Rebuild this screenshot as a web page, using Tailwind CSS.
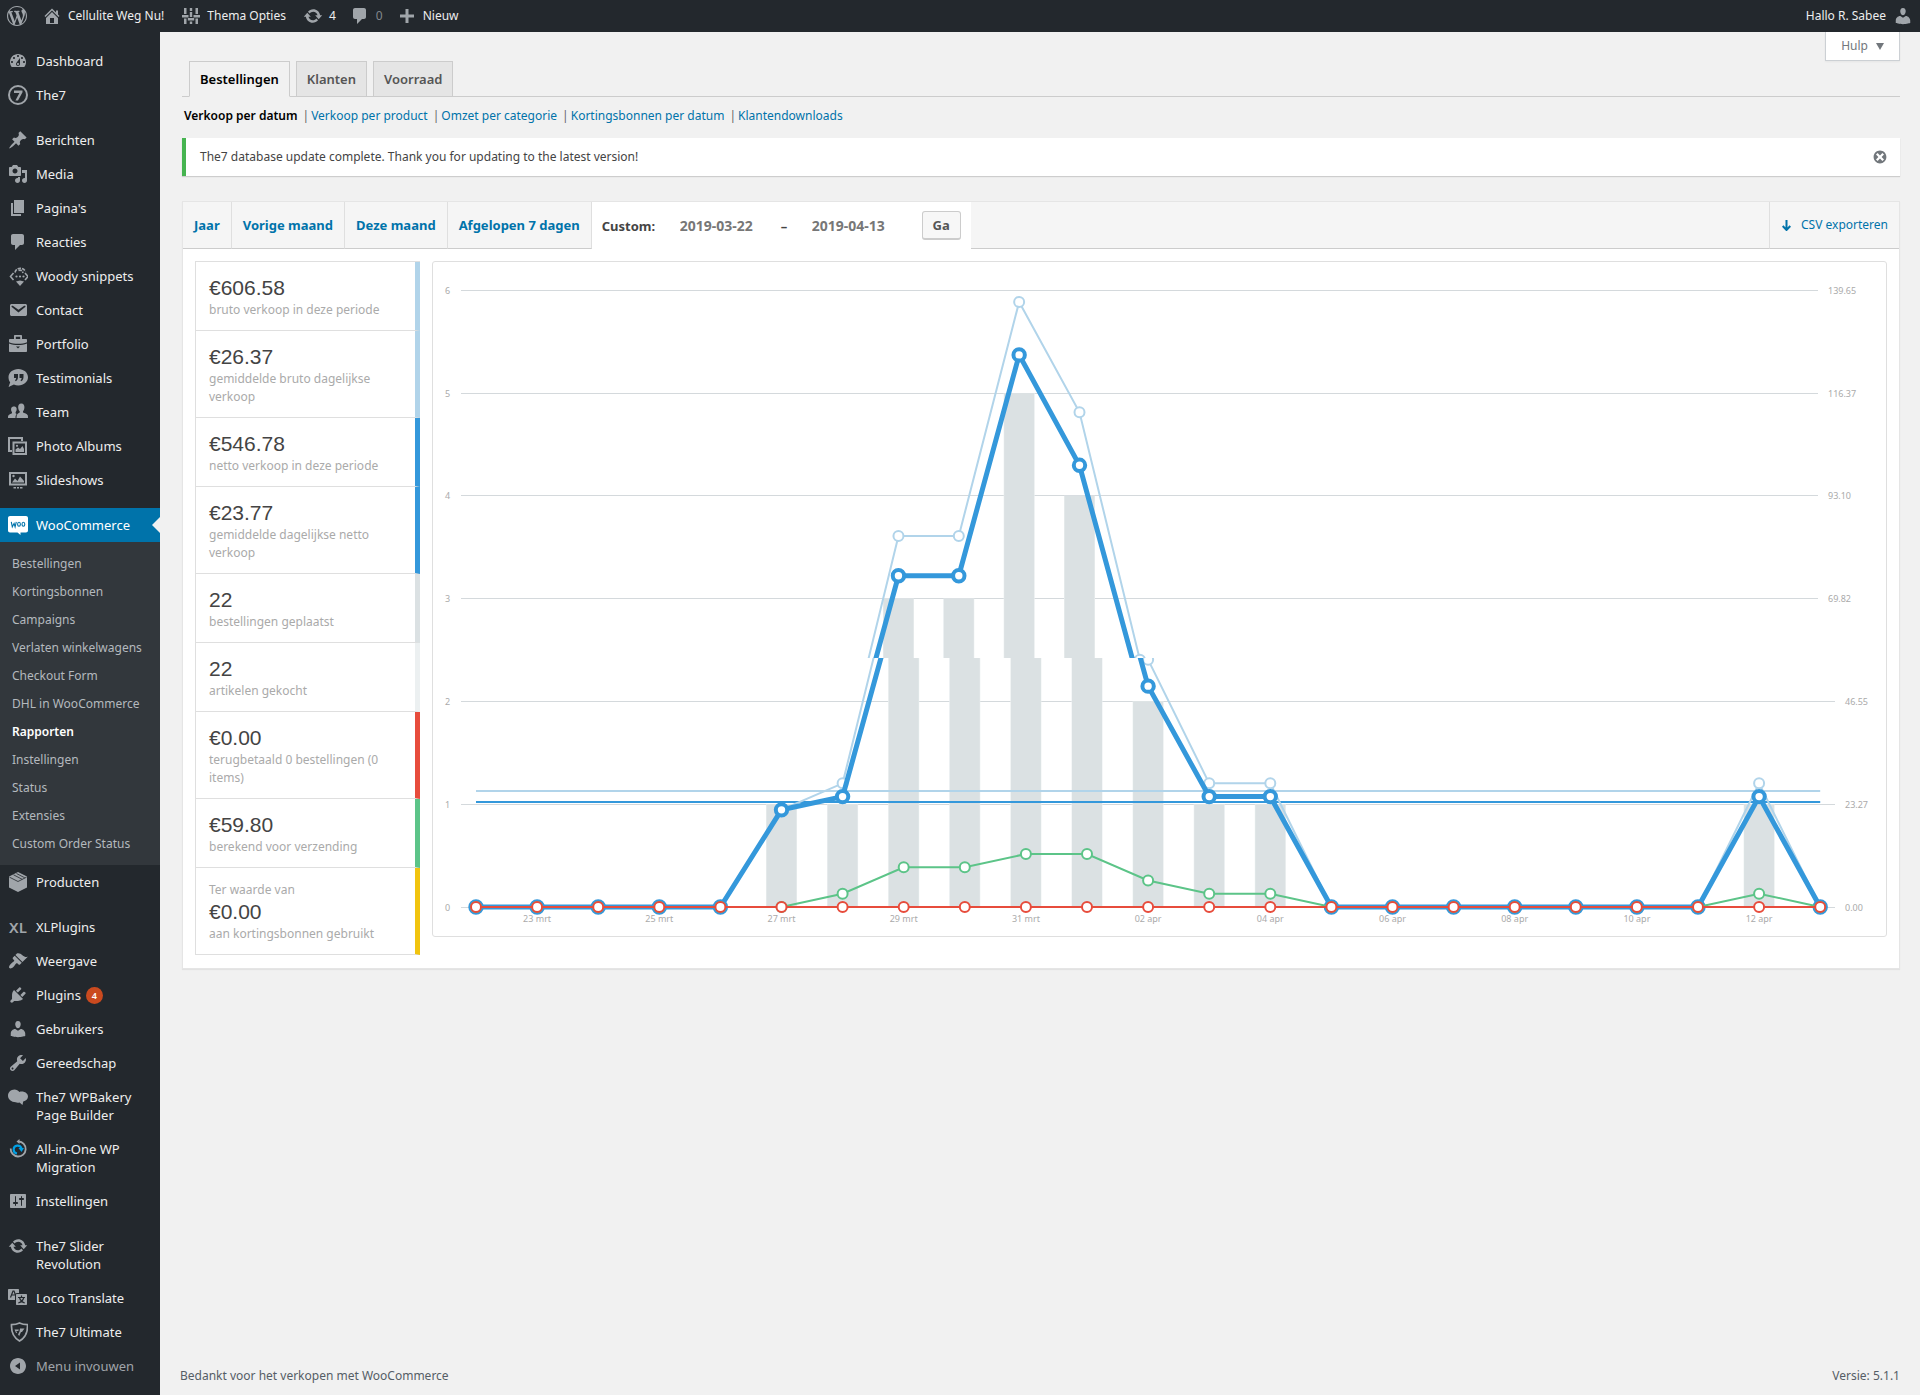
<!DOCTYPE html>
<html lang="nl">
<head>
    <meta charset="UTF-8">
    <meta name="viewport" content="width=device-width, initial-scale=1.0">
    <title>Rapporten ‹ Cellulite Weg Nu! — WordPress</title>
    <script src="https://cdn.jsdelivr.net/npm/@tailwindcss/browser@4"></script>
</head>
<body class="min-h-screen flex flex-col bg-[#f1f1f1] font-['Noto_Sans','Open_Sans',sans-serif] text-[12px] leading-[18px] text-[#444]">

    <!-- icon sprite -->
    <svg class="hidden" xmlns="http://www.w3.org/2000/svg">
        <symbol id="i-wp" viewBox="0 0 20 20"><path d="M20 10c0-5.51-4.49-10-10-10C4.48 0 0 4.49 0 10c0 5.52 4.48 10 10 10 5.51 0 10-4.48 10-10zM7.78 15.37L4.37 6.22c.55-.02 1.17-.08 1.17-.08.5-.06.44-1.13-.06-1.11 0 0-1.45.11-2.37.11-.18 0-.37 0-.58-.01C4.12 2.69 6.87 1.11 10 1.11c2.33 0 4.45.87 6.05 2.34-.68-.11-1.65.39-1.65 1.58 0 .74.45 1.36.9 2.1.35.61.55 1.36.55 2.46 0 1.49-1.4 5-1.4 5l-3.03-8.37c.54-.02.82-.17.82-.17.5-.05.44-1.25-.06-1.22 0 0-1.44.12-2.38.12-.87 0-2.33-.12-2.33-.12-.5-.03-.56 1.2-.06 1.22l.92.08 1.26 3.41zM17.41 10c.24-.64.74-1.87.43-4.25.7 1.29 1.05 2.71 1.05 4.25 0 3.29-1.73 6.24-4.4 7.78.97-2.59 1.94-5.2 2.92-7.78zM6.1 18.09C3.12 16.65 1.11 13.53 1.11 10c0-1.3.23-2.48.72-3.59C3.25 10.3 4.67 14.2 6.1 18.09zm4.03-6.63l2.58 6.98c-.86.29-1.76.45-2.71.45-.79 0-1.57-.11-2.29-.33.81-2.38 1.62-4.74 2.42-7.1z"/></symbol>
        <symbol id="i-home" viewBox="0 0 20 20"><path d="M16 8.5l1.53 1.53-1.06 1.06L10 4.6l-6.47 6.49-1.06-1.06L10 2.5l4 4v-2h2v4zm-6-2.46l6 5.99V18H4v-5.97zM12 17v-5H8v5h4z"/></symbol>
        <symbol id="i-sliders" viewBox="0 0 20 20"><path d="M3 2h2.500v6H3zM1 9h6.500v2.500H1zM3 12.500h2.500V18H3zM8.800 2h2.400v3H8.800zM8.800 6h2.400v5H8.800zM6.800 12h6.400v2.500H6.800zM8.800 15.500h2.400V18H8.800zM14.500 2H17v6h-2.500zM12.500 9H19v2.500h-6.500zM14.500 12.500H17V18h-2.500z"/></symbol>
        <symbol id="i-update" viewBox="0 0 20 20"><path d="M10.2 3.28c3.53 0 6.43 2.61 6.92 6h2.08l-3.5 4-3.5-4h2.32c-.45-1.97-2.21-3.45-4.32-3.45-1.45 0-2.73.71-3.54 1.78L4.95 5.66C6.23 4.2 8.11 3.28 10.2 3.28zm-.4 13.44c-3.52 0-6.43-2.61-6.92-6H.8l3.5-4c1.17 1.33 2.33 2.67 3.5 4H5.48c.45 1.97 2.21 3.45 4.32 3.45 1.45 0 2.73-.71 3.54-1.78l1.71 1.95c-1.28 1.46-3.15 2.38-5.25 2.38z"/></symbol>
        <symbol id="i-comment" viewBox="0 0 20 20"><path d="M5 2h9c1.1 0 2 .9 2 2v7c0 1.1-.9 2-2 2h-2l-5 5v-5H5c-1.1 0-2-.9-2-2V4c0-1.1.9-2 2-2z"/></symbol>
        <symbol id="i-plus" viewBox="0 0 20 20"><path d="M8.500 3h3v5.500H17v3h-5.500V17h-3v-5.500H3v-3h5.500z"/></symbol>
        <symbol id="i-user" viewBox="0 0 20 20"><path d="M10 9.25c-2.27 0-2.73-3.44-2.73-3.44C7 4.02 7.82 2 9.97 2c2.16 0 2.98 2.02 2.71 3.81 0 0-.41 3.44-2.68 3.44zm0 2.57L12.72 10c2.39 0 4.52 2.33 4.52 4.53v2.49s-3.65 1.13-7.24 1.13c-3.65 0-7.24-1.13-7.24-1.13v-2.49c0-2.25 1.94-4.48 4.47-4.48z"/></symbol>
        <symbol id="i-dashboard" viewBox="0 0 20 20"><path d="M3.76 16h12.48c1.1-1.37 1.76-3.11 1.76-5 0-4.42-3.58-8-8-8s-8 3.58-8 8c0 1.89.66 3.63 1.76 5zM10 4c.55 0 1 .45 1 1s-.45 1-1 1-1-.45-1-1 .45-1 1-1zM6 6c.55 0 1 .45 1 1s-.45 1-1 1-1-.45-1-1 .45-1 1-1zm8 0c.55 0 1 .45 1 1s-.45 1-1 1-1-.45-1-1 .45-1 1-1zm-5.370 5.550L12 7v6c0 1.100-.9 2-2 2s-2-.9-2-2c0-.57.24-1.080.63-1.450zM4 10c.55 0 1 .45 1 1s-.45 1-1 1-1-.45-1-1 .45-1 1-1zm12 0c.55 0 1 .45 1 1s-.45 1-1 1-1-.45-1-1 .45-1 1-1zm-5 3c0-.55-.45-1-1-1s-1 .45-1 1 .45 1 1 1 1-.45 1-1z"/></symbol>
        <symbol id="i-seven" viewBox="0 0 20 20"><circle cx="10" cy="10" r="9" fill="none" stroke="currentColor" stroke-width="2"/><path d="M6 5.500h8.500v1.800L10 15.500H7.400l4-7.600H6z"/></symbol>
        <symbol id="i-pin" viewBox="0 0 20 20"><path d="M10.44 3.02l1.82-1.82 6.36 6.35-1.83 1.82c-1.05-.68-2.48-.57-3.41.36l-.75.75c-.92.93-1.04 2.35-.35 3.41l-1.83 1.82-2.41-2.41-2.8 2.79c-.42.42-3.38 2.71-3.8 2.29s1.86-3.39 2.28-3.81l2.79-2.79L4.1 9.36l1.83-1.82c1.05.69 2.48.57 3.4-.36l.75-.75c.93-.92 1.05-2.35.36-3.41z"/></symbol>
        <symbol id="i-media" viewBox="0 0 20 20"><path d="M13 11V4c0-.55-.45-1-1-1h-1.67L9 1H5L3.67 3H2c-.55 0-1 .45-1 1v7c0 .55.45 1 1 1h10c.55 0 1-.45 1-1zM7 4.5c1.38 0 2.5 1.12 2.5 2.5S8.38 9.5 7 9.5 4.5 8.38 4.5 7 5.62 4.5 7 4.5zM14 6h5v10.5c0 1.38-1.12 2.5-2.5 2.5S14 17.88 14 16.5s1.12-2.5 2.5-2.5c.17 0 .34.02.5.05V9h-3V6zm-4 8.05V13h2v3.5c0 1.38-1.12 2.5-2.5 2.5S7 17.88 7 16.5 8.12 14 9.5 14c.17 0 .34.02.5.05z"/></symbol>
        <symbol id="i-page" viewBox="0 0 20 20"><path d="M6 15V2h10v13H6zm-1 1h8v2H3V5h2v11z"/></symbol>
        <symbol id="i-woody" viewBox="0 0 20 20"><g fill="none" stroke="currentColor" stroke-width="1.6"><path d="M5.500 7L2.500 10.500 5.500 14M17 7l3 3.500L17 14"/><path d="M7 6.500C8 1.500 15 .5 17.500 5.500M10.500 4.500c2-1 4 0 4.500 2.500" stroke-dasharray="3.500 1"/></g><circle cx="8.500" cy="10.500" r="1.100"/><circle cx="12" cy="10.500" r="1.100"/><circle cx="15.500" cy="10.500" r="1.100"/><path d="M8 15.500l4-1 4 1L12 20z"/></symbol>
        <symbol id="i-mail" viewBox="0 0 20 20"><path d="M3.870 4h13.250C18.370 4 19 4.590 19 5.790v8.420c0 1.190-.63 1.790-1.880 1.790H3.870c-1.250 0-1.880-.6-1.880-1.790V5.790c0-1.200.63-1.790 1.880-1.790zm6.620 8.600l6.740-5.530c.24-.2.43-.66.13-1.070-.29-.41-.82-.42-1.170-.17l-5.700 3.860L4.800 5.830c-.35-.25-.88-.24-1.170.17-.3.41-.11.87.13 1.070z"/></symbol>
        <symbol id="i-portfolio" viewBox="0 0 20 20"><path d="M6 5V2c0-.6.4-1 1-1h6c.6 0 1 .4 1 1v3h4c.6 0 1 .4 1 1v2.200c-2.500 1-5.500 1.500-9 1.500S3.500 9.200 1 8.200V6c0-.6.4-1 1-1zm1.800 0h4.400V2.800H7.800zM1 9.500c2.800 1.100 5.800 1.600 9 1.600s6.200-.5 9-1.600V17c0 .6-.4 1-1 1H2c-.6 0-1-.4-1-1zM8 12.500l2 2 2-2z" fill-rule="evenodd"/></symbol>
        <symbol id="i-quote" viewBox="0 0 20 20"><path fill-rule="evenodd" d="M10.300 1C15.700 1 20 4.600 20 9.200s-4.300 8.200-9.700 8.200c-1.600 0-3.100-.3-4.400-.9L.5 19l1.700-4.800C1 12.800.5 11 .5 9.200.5 4.600 4.900 1 10.300 1zM6 6v4h2.200c0 1-.4 1.700-1.200 2.200l.7 1C9.300 12.300 10 11 10 9V6zm5.500 0v4h2.200c0 1-.4 1.700-1.200 2.200l.7 1c1.600-.9 2.300-2.200 2.300-4.200V6z"/></symbol>
        <symbol id="i-team" viewBox="0 0 20 20"><path d="M13.300 1.500c2.300 0 3.300 1.800 3.100 4.200-.2 1.700-.8 2.800-1.400 3.500v1.300c1.500.8 4 1.300 4.700 2.700.3.700.3 2 .3 2.800H8.500c0-.8 0-2 .3-2.800.6-1.400 1.700-1.900 2.900-2.700V9.200c-.7-.7-1.300-1.800-1.500-3.500-.2-2.400.8-4.200 3.100-4.200zM6 4.500c1.300 0 2.300.6 2.600 1.800.3 1.500-.2 3-1 3.900v1c.4.3.9.5 1.200.8-1.100 1-1.300 2.400-1.300 4H0c0-.8 0-1.700.2-2.300.5-1.300 2.600-1.700 3.800-2.500v-1c-.8-.9-1.100-2.400-.8-3.900C3.500 5.100 4.700 4.500 6 4.500z"/></symbol>
        <symbol id="i-album" viewBox="0 0 20 20"><path fill-rule="evenodd" d="M0 1h15v4h-2V3H2v11h3v2H0zM4.500 5.500H19V19H4.500zm2 2v9.500H17V7.500zM7.500 16v-2.500l2.500-2 2 1.500 2.500-3L16 13v3z"/><circle cx="9" cy="9.800" r="1.100"/></symbol>
        <symbol id="i-slides" viewBox="0 0 20 20"><path fill-rule="evenodd" d="M1 2h18v13.500H1zm2 2v9.500h14V4zM4 12.500l3-4 2.500 2.500L12 6.500l4 4.500v1.500zM5.500 17H8v1.500H5.500zm3.500 0h2v1.500H9zm3 0h2.500v1.500H12z"/><circle cx="5.500" cy="6" r="1.200"/></symbol>
        <symbol id="i-woo" viewBox="0 0 20 20"><path d="M2 1h16c1.100 0 2 .9 2 2v12.500c0 1.100-.9 2-2 2h-5.500V20l-3-2.500H2c-1.100 0-2-.9-2-2V3c0-1.100.9-2 2-2z" fill="#fff"/><g fill="none" stroke="#0073aa" stroke-width="1.100"><path d="M3.300 6.800l1 5 1.800-3.300 1 3.300 1.200-5"/><ellipse cx="11" cy="9.300" rx="1.400" ry="2"/><ellipse cx="15.400" cy="9.300" rx="1.400" ry="2"/></g></symbol>
        <symbol id="i-box" viewBox="0 0 20 20"><path d="M10 0l9 4.500v11L10 20l-9-4.500v-11z"/><path d="M1.500 5.200L10 9.500l8.500-4.300M5.500 2.800l8.700 4.500M8.500 1.500l8.300 4.300" fill="none" stroke="#23282d" stroke-width=".8"/></symbol>
        <symbol id="i-brush" viewBox="0 0 20 20"><path d="M14.48 11.06L7.41 3.99l1.5-1.5c.5-.56 2.3-.47 3.51.32 1.21.8 1.43 1.28 2.91 2.1 1.18.64 2.45 1.26 4.45.85zm-.71.71L6.7 4.7 4.93 6.47c-.39.39-.39 1.02 0 1.41l1.06 1.06c.39.39.39 1.03 0 1.42-.6.6-1.43 1.11-2.21 1.69-.35.26-.7.53-1.01.84C1.43 14.23.4 16.08 1.4 17.07c.99 1 2.84-.03 4.18-1.36.31-.31.58-.66.85-1.02.57-.78 1.08-1.61 1.69-2.21.39-.39 1.02-.39 1.41 0l1.06 1.06c.39.39 1.02.39 1.41 0z"/></symbol>
        <symbol id="i-plug" viewBox="0 0 20 20"><path d="M13.11 4.36L9.87 7.6 8 5.73l3.24-3.24c.35-.34 1.05-.2 1.56.32.52.51.66 1.21.31 1.55zm-8 1.77l.91-1.12 9.01 9.01-1.19.84c-.71.71-2.63 1.16-3.82 1.16H6.14L4.9 17.26c-.59.59-1.54.59-2.12 0-.59-.58-.59-1.53 0-2.12l1.24-1.24v-3.88c0-1.13.4-3.19 1.09-3.89zm7.26 3.97l3.24-3.24c.34-.35 1.04-.21 1.55.31.52.51.66 1.21.31 1.55l-3.24 3.25z"/></symbol>
        <symbol id="i-wrench" viewBox="0 0 20 20"><path d="M16.68 9.77c-1.34 1.34-3.3 1.67-4.95.99l-5.41 6.52c-.99.99-2.59.99-3.58 0s-.99-2.59 0-3.57l6.52-5.42c-.68-1.65-.35-3.61.99-4.95 1.28-1.28 3.12-1.62 4.72-1.06l-2.89 2.89 2.82 2.82 2.86-2.87c.53 1.58.18 3.39-1.08 4.65zM3.81 16.21c.4.39 1.04.39 1.43 0 .4-.4.4-1.04 0-1.43-.39-.4-1.03-.4-1.43 0-.39.39-.39 1.03 0 1.43z"/></symbol>
        <symbol id="i-bakery" viewBox="0 0 20 20"><path d="M6.500 2.500c2 0 3.700.9 4.900 2.400.7-.3 1.500-.4 2.300-.4 3.500 0 6.300 2.200 6.300 5.100 0 2.500-2 4.500-4.800 5L14.500 18l-3-2.500c-1.500.5-3 .3-3.800-.2C3.300 15.300 0 12.300 0 8.800S2.900 2.500 6.500 2.500z"/></symbol>
        <symbol id="i-migrate" viewBox="0 0 20 20"><path d="M10.500 2.500a7.500 7.500 0 1 1-7.800 7" fill="none" stroke="currentColor" stroke-width="1.800"/><path d="M11.500 0v5L8.500 2.500z"/><path d="M9 14.500a4 4 0 1 1 4.500-5" fill="none" stroke="#00a0e4" stroke-width="2.200"/><path d="M10.500 9h5.500l-2.500 4z" fill="#00a0e4"/></symbol>
        <symbol id="i-settings" viewBox="0 0 20 20"><path d="M18 16V4c0-.55-.45-1-1-1H3c-.55 0-1 .45-1 1v12c0 .55.45 1 1 1h14c.55 0 1-.45 1-1zM8 11h1c.55 0 1 .45 1 1s-.45 1-1 1H8v1.5c0 .28-.22.5-.5.5s-.5-.22-.5-.5V13H6c-.55 0-1-.45-1-1s.45-1 1-1h1V5.500c0-.28.22-.5.5-.5s.5.22.5.5V11zm5-2h-1c-.55 0-1-.45-1-1s.45-1 1-1h1V5.500c0-.28.22-.5.5-.5s.5.22.5.5V7h1c.55 0 1 .45 1 1s-.45 1-1 1h-1v5.500c0 .28-.22.5-.5.5s-.5-.22-.5-.5V9z"/></symbol>
        <symbol id="i-translate" viewBox="0 0 20 20"><path d="M1 1h9c.6 0 1 .4 1 1v3H9c-1.100 0-2 .9-2 2v5H1c-.6 0-1-.4-1-1V2c0-.6.400-1 1-1zM9 6h9c.6 0 1 .4 1 1v9c0 .6-.4 1-1 1H9c-.6 0-1-.4-1-1V7c0-.6.4-1 1-1z"/><g fill="none" stroke="#23282d" stroke-width="1.200"><path d="M2.500 9.500L5 3h1l1.500 4M3.500 7h3.500M13.500 7.500v1.500M10 9.500h7M15.800 9.500c-.6 2.500-2.500 4.500-5.500 5.500M11.500 9.500c.6 2.500 2.500 4.500 5.200 5.500"/></g></symbol>
        <symbol id="i-shield" viewBox="0 0 20 20"><path d="M11.500 1c2.500 1.200 5 1.600 8 1.600.4 8-2 13-8 16.400-6-3.400-8.400-8.400-8-16.400 3 0 5.500-.4 8-1.600z" fill="none" stroke="currentColor" stroke-width="1.700"/><path d="M6.500 7.500h4.300L10.300 9H8l1.200 1.200-1 1zM12 6.500h4.500L15 8.500l-1 1.500h-1L11.200 14l-1.200-1.500 1.500-3z"/></symbol>
        <symbol id="i-collapse" viewBox="0 0 20 20"><path d="M10 2c4.420 0 8 3.580 8 8s-3.580 8-8 8-8-3.580-8-8 3.580-8 8-8zm2 4.500L7 10l5 3.500z"/></symbol>
        <symbol id="i-dismiss" viewBox="0 0 20 20"><path d="M10 2c4.42 0 8 3.58 8 8s-3.58 8-8 8-8-3.58-8-8 3.58-8 8-8zm5 11l-3-3 3-3-2-2-3 3-3-3-2 2 3 3-3 3 2 2 3-3 3 3z"/></symbol>
    </svg>

    <!-- admin bar -->
    <header class="h-8 px-[7px] flex items-center justify-between bg-[#23282d] text-[#eee] text-[12px] [&_svg]:size-5 [&_svg]:fill-[#a0a5aa] [&_svg]:text-[#a0a5aa]">
        <nav class="flex items-center">
            <a href="#" class="mr-[15px]" aria-label="Over WordPress"><svg><use href="#i-wp"/></svg></a>
            <a href="#" class="flex items-center gap-[6px] mr-[17px]"><svg><use href="#i-home"/></svg>Cellulite Weg Nu!</a>
            <a href="#" class="flex items-center gap-[6px] mr-[17px]"><svg><use href="#i-sliders"/></svg>Thema Opties</a>
            <a href="#" class="flex items-center gap-[6px] mr-[14px]"><svg><use href="#i-update"/></svg>4</a>
            <a href="#" class="flex items-center gap-[6px] mr-[14px] text-[#82878c]"><svg><use href="#i-comment"/></svg>0</a>
            <a href="#" class="flex items-center gap-[6px]"><svg><use href="#i-plus"/></svg>Nieuw</a>
        </nav>
        <a href="#" class="flex items-center gap-[7px]">Hallo R. Sabee<svg><use href="#i-user"/></svg></a>
    </header>

    <div class="flex grow">
        <!-- menu -->
        <aside class="w-40 shrink-0 bg-[#23282d] pt-3 text-[13px] text-[#eee]">
            <ul class="[&>li>a]:flex [&>li>a]:items-start [&>li>a]:gap-2 [&>li>a]:py-2 [&>li>a]:pl-2 [&_svg]:size-5 [&_svg]:shrink-0 [&_svg]:fill-[#a0a5aa] [&_svg]:text-[#a0a5aa] [&_svg]:-my-px">
                <li><a href="#"><svg><use href="#i-dashboard"/></svg>Dashboard</a></li>
                <li class="mb-[11px]"><a href="#"><svg><use href="#i-seven"/></svg>The7</a></li>
                <li><a href="#"><svg><use href="#i-pin"/></svg>Berichten</a></li>
                <li><a href="#"><svg><use href="#i-media"/></svg>Media</a></li>
                <li><a href="#"><svg><use href="#i-page"/></svg>Pagina's</a></li>
                <li><a href="#"><svg><use href="#i-comment"/></svg>Reacties</a></li>
                <li><a href="#"><svg><use href="#i-woody"/></svg>Woody snippets</a></li>
                <li><a href="#"><svg><use href="#i-mail"/></svg>Contact</a></li>
                <li><a href="#"><svg><use href="#i-portfolio"/></svg>Portfolio</a></li>
                <li><a href="#"><svg><use href="#i-quote"/></svg>Testimonials</a></li>
                <li><a href="#"><svg><use href="#i-team"/></svg>Team</a></li>
                <li><a href="#"><svg><use href="#i-album"/></svg>Photo Albums</a></li>
                <li class="mb-[11px]"><a href="#"><svg><use href="#i-slides"/></svg>Slideshows</a></li>
                <li>
                    <a href="#" class="relative bg-[#0073aa] text-white"><svg><use href="#i-woo"/></svg>WooCommerce<span class="absolute right-0 top-[9px] border-8 border-transparent border-r-[#f1f1f1]"></span></a>
                    <ul class="bg-[#32373c] pt-2 pb-[7px] pl-3 text-[12px] leading-7 text-[#b4b9be]">
                        <li><a href="#">Bestellingen</a></li>
                        <li><a href="#">Kortingsbonnen</a></li>
                        <li><a href="#">Campaigns</a></li>
                        <li><a href="#">Verlaten winkelwagens</a></li>
                        <li><a href="#">Checkout Form</a></li>
                        <li><a href="#">DHL in WooCommerce</a></li>
                        <li><a href="#" class="font-semibold text-white">Rapporten</a></li>
                        <li><a href="#">Instellingen</a></li>
                        <li><a href="#">Status</a></li>
                        <li><a href="#">Extensies</a></li>
                        <li><a href="#">Custom Order Status</a></li>
                    </ul>
                </li>
                <li class="mb-[11px]"><a href="#"><svg><use href="#i-box"/></svg>Producten</a></li>
                <li><a href="#"><span class="w-5 text-center text-[15px] font-semibold text-[#a0a5aa]">XL</span>XLPlugins</a></li>
                <li><a href="#"><svg><use href="#i-brush"/></svg>Weergave</a></li>
                <li><a href="#"><svg><use href="#i-plug"/></svg><span class="flex items-center gap-[5px]">Plugins <span class="size-[17px] rounded-full bg-[#ca4a1f] text-center text-[9px] leading-[17px] font-semibold text-white">4</span></span></a></li>
                <li><a href="#"><svg><use href="#i-user"/></svg>Gebruikers</a></li>
                <li><a href="#"><svg><use href="#i-wrench"/></svg>Gereedschap</a></li>
                <li><a href="#"><svg><use href="#i-bakery"/></svg>The7 WPBakery<br>Page Builder</a></li>
                <li><a href="#"><svg><use href="#i-migrate"/></svg>All-in-One WP<br>Migration</a></li>
                <li class="mb-[11px]"><a href="#"><svg><use href="#i-settings"/></svg>Instellingen</a></li>
                <li><a href="#"><svg><use href="#i-update"/></svg>The7 Slider<br>Revolution</a></li>
                <li><a href="#"><svg><use href="#i-translate"/></svg>Loco Translate</a></li>
                <li><a href="#"><svg><use href="#i-shield"/></svg>The7 Ultimate</a></li>
            </ul>
            <button type="button" class="flex items-start gap-2 py-2 pl-2 text-[#a0a5aa]"><svg class="size-5 -my-px fill-[#a0a5aa]"><use href="#i-collapse"/></svg>Menu invouwen</button>
        </aside>

        <div class="grow min-w-0 flex flex-col pr-5">
            <div class="flex justify-end h-[29px]">
                <button type="button" class="flex items-center gap-2 border border-t-0 border-[#ccd0d4] bg-white px-[15px] text-[#72777c] shadow-xs">Hulp <span class="border-x-4 border-t-[7px] border-x-transparent border-t-[#72777c]"></span></button>
            </div>

            <main class="pl-[22px]">
                <nav class="flex gap-[6px] border-b border-[#ccc] pl-[7px] text-[13px] font-semibold [&>a]:-mb-px [&>a]:border [&>a]:border-[#ccc] [&>a]:px-[10px] [&>a]:py-2">
                    <a href="#" class="border-b-[#f1f1f1]! bg-[#f1f1f1] text-black">Bestellingen</a>
                    <a href="#" class="bg-[#e5e5e5] text-[#555]">Klanten</a>
                    <a href="#" class="bg-[#e5e5e5] text-[#555]">Voorraad</a>
                </nav>

                <ul class="mt-[10px] flex pl-[2px] text-[#0073aa] [&_span]:ml-[5px] [&_span]:mr-[2px] [&_span]:text-[#666]">
                    <li><a href="#" class="font-semibold text-black">Verkoop per datum</a><span>|</span></li>
                    <li><a href="#">Verkoop per product</a><span>|</span></li>
                    <li><a href="#">Omzet per categorie</a><span>|</span></li>
                    <li><a href="#">Kortingsbonnen per datum</a><span>|</span></li>
                    <li><a href="#">Klantendownloads</a></li>
                </ul>

                <div class="mt-[13px] flex items-center justify-between border-l-4 border-[#46b450] bg-white h-[38px] pl-[14px] pr-[12px] shadow-[0_1px_1px_rgba(0,0,0,0.15)]">
                    <p>The7 database update complete. Thank you for updating to the latest version!</p>
                    <button type="button" aria-label="Dit bericht verbergen"><svg class="size-4 fill-[#72777c]"><use href="#i-dismiss"/></svg></button>
                </div>

                <section class="mt-[25px] border border-[#e5e5e5] bg-white shadow-[0_1px_1px_rgba(0,0,0,0.06)]">
                    <div class="flex bg-[#f5f5f5] text-[13px] font-bold text-[#0073aa] [&>a]:border-r [&>a]:border-b [&>a]:border-r-[#dfdfdf] [&>a]:border-b-[#ccc] [&>a]:px-[11px] [&>a]:py-[14px]">
                        <a href="#">Jaar</a>
                        <a href="#">Vorige maand</a>
                        <a href="#">Deze maand</a>
                        <a href="#">Afgelopen 7 dagen</a>
                        <form class="flex items-center bg-white px-[10px] text-[#444]">
                            <label for="from" class="w-[68px]">Custom:</label>
                            <input id="from" type="text" value="2019-03-22" class="w-[101px] px-[10px] text-[14px] text-[#777]">
                            <span class="w-[31px] pl-[10px]">–</span>
                            <input id="to" type="text" value="2019-04-13" aria-label="Tot" class="w-[101px] px-[10px] text-[14px] text-[#777]">
                            <button type="button" class="ml-[19px] h-[29px] w-[39px] rounded-[3px] border border-b-2 border-[#ccc] bg-[#f7f7f7] text-[#555]">Ga</button>
                        </form>
                        <div class="grow border-b border-[#ccc]"></div>
                        <a href="#" class="flex items-center gap-[10px] border-l border-l-[#dfdfdf] border-r-0! text-[12px] font-normal"><svg class="ml-px h-[11px] w-[9px] fill-none stroke-[#0073aa] stroke-2" viewBox="0 0 9 11"><path d="M4.500 0v10M.7 6l3.800 4 3.800-4"/></svg>CSV exporteren</a>
                    </div>

                    <div class="flex items-start gap-3 px-3 pt-3 pb-[13px]">
                        <ul class="w-[225px] shrink-0 border-t border-[#dfdfdf] text-[#aaa] [&>li]:border-b [&>li]:border-l [&>li]:border-r-[5px] [&>li]:border-b-[#dfdfdf] [&>li]:border-l-[#dfdfdf] [&>li]:pt-[13px] [&>li]:pr-[13px] [&>li]:pb-[11px] [&>li]:pl-[13px] [&_strong]:block [&_strong]:font-['Liberation_Sans',Arial,sans-serif] [&_strong]:text-[21px] [&_strong]:leading-[26px] [&_strong]:font-normal [&_strong]:text-[#444]">
                            <li class="border-r-[#b1d4ea]"><strong>€606.58</strong>bruto verkoop in deze periode</li>
                            <li class="border-r-[#b1d4ea]"><strong>€26.37</strong>gemiddelde bruto dagelijkse verkoop</li>
                            <li class="border-r-[#3498db]"><strong>€546.78</strong>netto verkoop in deze periode</li>
                            <li class="border-r-[#3498db]"><strong>€23.77</strong>gemiddelde dagelijkse netto verkoop</li>
                            <li class="border-r-[#dbe1e3]"><strong>22</strong>bestellingen geplaatst</li>
                            <li class="border-r-[#ecf0f1]"><strong>22</strong>artikelen gekocht</li>
                            <li class="border-r-[#e74c3c]"><strong>€0.00</strong>terugbetaald 0 bestellingen (0 items)</li>
                            <li class="border-r-[#5cc488]"><strong>€59.80</strong>berekend voor verzending</li>
                            <li class="border-r-[#f1c40f]">Ter waarde van<strong>€0.00</strong>aan kortingsbonnen gebruikt</li>
                        </ul>
                        <div class="grow min-w-0 rounded-[3px] border border-[#dfdfdf]">
                            <svg id="chart" viewBox="0 0 1453 674" class="block w-full h-auto" role="img" aria-label="Verkoop per datum"></svg>
                        </div>
                    </div>
                </section>
            </main>

            <footer class="mt-auto flex justify-between pl-5 pb-[10px] text-[#555d66]">
                <p>Bedankt voor het verkopen met WooCommerce</p>
                <p>Versie: 5.1.1</p>
            </footer>
        </div>
    </div>

    <script>
        // index 0 = 22 mrt, index 22 = 13 apr
        const orders   = [0, 0, 0, 0, 0, 1, 1, 3, 3, 5, 4, 2, 1, 1, 0, 0, 0, 0, 0, 0, 0, 1, 0];
        const gross    = [0, 0, 0, 0, 0, 22, 28, 84, 84, 137, 112, 56, 28, 28, 0, 0, 0, 0, 0, 0, 0, 28, 0];
        const net      = [0, 0, 0, 0, 0, 22, 25, 75, 75, 125, 100, 50, 25, 25, 0, 0, 0, 0, 0, 0, 0, 25, 0];
        const shipping = [0, 0, 0, 0, 0, 0, 3, 9, 9, 12, 12, 6, 3, 3, 0, 0, 0, 0, 0, 0, 0, 3, 0];
        const refunds  = orders.map(() => 0);
        const ticks = ['23 mrt', '25 mrt', '27 mrt', '29 mrt', '31 mrt', '02 apr', '04 apr', '06 apr', '08 apr', '10 apr', '12 apr'];
        const money = ['0.00', '23.27', '46.55', '69.82', '93.10', '116.37', '139.65'];

        const x0 = 43, y0 = 645, unit = 102.8, split = 396;
        const yMoney = v => y0 - v / 139.65 * unit * 6;

        function line(values, step, color, width, r, ring) {
            const pts = values.map((v, i) => [x0 + i * step, yMoney(v)]);
            return `<polyline points="${pts.join(' ')}" fill="none" stroke="${color}" stroke-width="${width}"/>` +
                pts.map(p => `<circle cx="${p[0]}" cy="${p[1]}" r="${r}" fill="#fff" stroke="${color}" stroke-width="${ring}"/>`).join('');
        }

        function average(v, step, color) {
            return `<path d="M${x0} ${Math.round(yMoney(v))}H${x0 + 22 * step}" stroke="${color}" stroke-width="2"/>`;
        }

        // the upper and lower band have their own day width
        function band(id, top, bottom, step, gridEnd, labelX) {
            let out = `<clipPath id="${id}"><rect x="0" y="${top}" width="1453" height="${bottom - top}"/></clipPath><g clip-path="url(#${id})">`;
            for (let i = 0; i <= 6; i++) {
                const y = Math.floor(y0 - i * unit);
                if (y < top || y > bottom) continue;
                out += `<path d="M28 ${y + 0.5}H${gridEnd}" stroke="#d4d9dc"/>`;
                out += `<text x="12" y="${y + 4}">${i}</text><text x="${labelX}" y="${y + 4}">${money[i]}</text>`;
            }
            orders.forEach((n, i) => {
                if (!n) return;
                const x = x0 + i * step, y = y0 - n * unit;
                out += `<rect x="${x - 15.5}" y="${y}" width="31" height="${n * unit}" fill="#ecf0f1"/>`;
                out += `<rect x="${x - 15}" y="${y}" width="30" height="${n * unit}" fill="#dbe1e3"/>`;
            });
            out += average(26.37, step, '#b1d4ea') + average(23.77, step, '#3498db');
            out += line(gross, step, '#b1d4ea', 2, 5, 2);
            out += line(net, step, '#3498db', 5, 5.7, 4);
            out += line(shipping, step, '#5cc488', 2, 5, 2);
            out += line(refunds, step, '#e74c3c', 2, 5, 2);
            return out + '</g>';
        }

        let svg = '<g font-size="9" fill="#aaa">';
        svg += band('upper', 0, split, 60.35, 1385, 1395);
        svg += band('lower', split, 674, 61.1, 1402, 1412);
        ticks.forEach((t, i) => {
            svg += `<text x="${x0 + (1 + i * 2) * 61.1}" y="660" text-anchor="middle">${t}</text>`;
        });
        document.getElementById('chart').innerHTML = svg + '</g>';
    </script>
</body>
</html>
